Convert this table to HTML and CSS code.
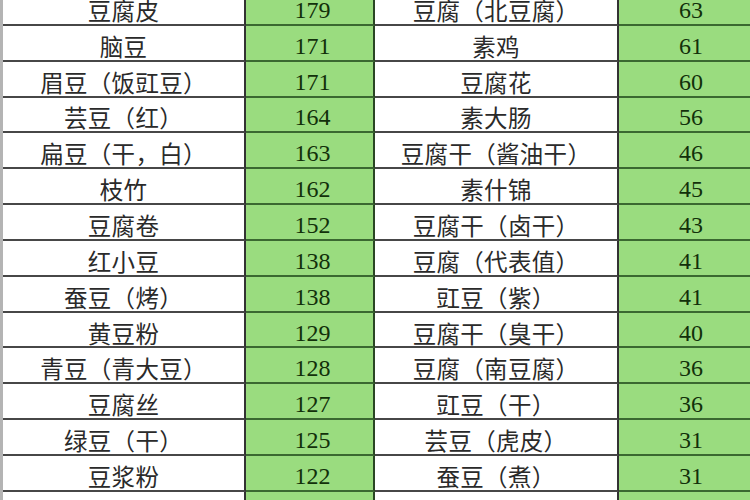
FILE: index.html
```html
<!DOCTYPE html>
<html lang="zh">
<head>
<meta charset="utf-8">
<link rel="stylesheet" href="styles.css">
</head>
<body>
<div class="sheet">
  <div class="cell name">豆腐皮</div><div class="cell num">179</div><div class="cell name">豆腐（北豆腐）</div><div class="cell num">63</div>
  <div class="cell name">脑豆</div><div class="cell num">171</div><div class="cell name">素鸡</div><div class="cell num">61</div>
  <div class="cell name">眉豆（饭豇豆）</div><div class="cell num">171</div><div class="cell name">豆腐花</div><div class="cell num">60</div>
  <div class="cell name">芸豆（红）</div><div class="cell num">164</div><div class="cell name">素大肠</div><div class="cell num">56</div>
  <div class="cell name">扁豆（干，白）</div><div class="cell num">163</div><div class="cell name">豆腐干（酱油干）</div><div class="cell num">46</div>
  <div class="cell name">枝竹</div><div class="cell num">162</div><div class="cell name">素什锦</div><div class="cell num">45</div>
  <div class="cell name">豆腐卷</div><div class="cell num">152</div><div class="cell name">豆腐干（卤干）</div><div class="cell num">43</div>
  <div class="cell name">红小豆</div><div class="cell num">138</div><div class="cell name">豆腐（代表值）</div><div class="cell num">41</div>
  <div class="cell name">蚕豆（烤）</div><div class="cell num">138</div><div class="cell name">豇豆（紫）</div><div class="cell num">41</div>
  <div class="cell name">黄豆粉</div><div class="cell num">129</div><div class="cell name">豆腐干（臭干）</div><div class="cell num">40</div>
  <div class="cell name">青豆（青大豆）</div><div class="cell num">128</div><div class="cell name">豆腐（南豆腐）</div><div class="cell num">36</div>
  <div class="cell name">豆腐丝</div><div class="cell num">127</div><div class="cell name">豇豆（干）</div><div class="cell num">36</div>
  <div class="cell name">绿豆（干）</div><div class="cell num">125</div><div class="cell name">芸豆（虎皮）</div><div class="cell num">31</div>
  <div class="cell name">豆浆粉</div><div class="cell num">122</div><div class="cell name">蚕豆（煮）</div><div class="cell num">31</div>
  <div class="cell name"></div><div class="cell num"></div><div class="cell name"></div><div class="cell num"></div>
</div>
</body>
</html>
```

FILE: styles.css
```css
html, body {
  margin: 0;
  padding: 0;
  width: 750px;
  height: 500px;
  overflow: hidden;
  background: #ffffff;
}

.sheet {
  display: grid;
  grid-template-columns: 243px 129px 244px 140px;
  grid-auto-rows: 35.85px;
  margin-top: -10px;
  border-left: 3px solid #b4b4b4;
}

.cell {
  box-sizing: border-box;
  display: flex;
  align-items: center;
  justify-content: center;
  padding-top: 6px;
  border-bottom: 2px solid #474747;
  border-right: 2px solid #333333;
  white-space: nowrap;
  line-height: 20px;
}

.name {
  background: #ffffff;
  color: #2a2a2a;
  font-family: "Noto Sans CJK SC", "Noto Sans CJK JP", sans-serif;
  font-weight: 400;
  font-size: 23.5px;
  letter-spacing: 0.3px;
}

.num {
  background: #9adc7f;
  color: #12300a;
  font-family: "Liberation Serif", serif;
  font-size: 24px;
  padding-left: 6px;
  border-bottom-color: #3a6830;
  border-right-color: #2a4624;
}
```
